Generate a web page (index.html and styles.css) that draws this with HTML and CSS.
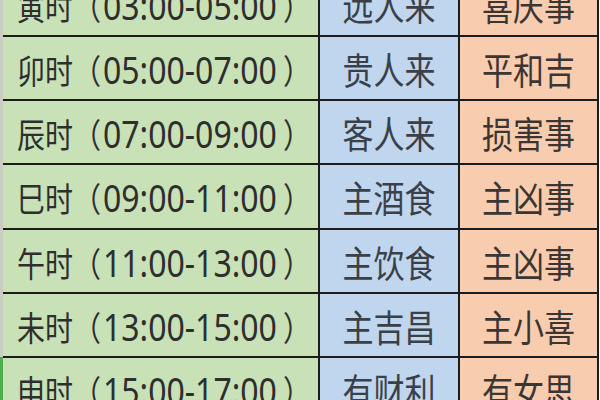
FILE: index.html
```html
<!DOCTYPE html>
<html lang="zh-CN">
<head>
<meta charset="utf-8">
<link rel="stylesheet" href="styles.css">
</head>
<body>
<div class="sheet">
  <div class="gutter"><span class="mark"></span></div>
  <div class="grid">
    <div class="cell time"><span class="t">寅时（<span class="num">03:00-05:00</span>）</span></div><div class="cell who"><span class="t">远人来</span></div><div class="cell what"><span class="t">喜庆事</span></div>
    <div class="cell time"><span class="t">卯时（<span class="num">05:00-07:00</span>）</span></div><div class="cell who"><span class="t">贵人来</span></div><div class="cell what"><span class="t">平和吉</span></div>
    <div class="cell time"><span class="t">辰时（<span class="num">07:00-09:00</span>）</span></div><div class="cell who"><span class="t">客人来</span></div><div class="cell what"><span class="t">损害事</span></div>
    <div class="cell time"><span class="t">巳时（<span class="num">09:00-11:00</span>）</span></div><div class="cell who"><span class="t">主酒食</span></div><div class="cell what"><span class="t">主凶事</span></div>
    <div class="cell time"><span class="t">午时（<span class="num">11:00-13:00</span>）</span></div><div class="cell who"><span class="t">主饮食</span></div><div class="cell what"><span class="t">主凶事</span></div>
    <div class="cell time"><span class="t">未时（<span class="num">13:00-15:00</span>）</span></div><div class="cell who"><span class="t">主吉昌</span></div><div class="cell what"><span class="t">主小喜</span></div>
    <div class="cell time"><span class="t">申时（<span class="num">15:00-17:00</span>）</span></div><div class="cell who"><span class="t">有财利</span></div><div class="cell what"><span class="t">有女思</span></div>
  </div>
</div>
</body>
</html>
```

FILE: styles.css
```css
html, body {
  margin: 0;
  padding: 0;
  background: #ffffff;
  overflow: hidden;
}
.sheet {
  display: flex;
  width: 600px;
  height: 400px;
  overflow: hidden;
}
.gutter {
  width: 3px;
  flex: none;
  background: #c9cdc4;
  display: flex;
  flex-direction: column;
  justify-content: flex-end;
}
.mark {
  height: 43px;
  background: #4cae4c;
}
.grid {
  display: grid;
  grid-template-columns: 315px 138px 137px;
  grid-template-rows: 62px 62px 62px 63px 62px 62px 62px;
  gap: 2px;
  padding-right: 2px;
  background: #1c1c1c;
  margin-top: -27px;
  align-self: flex-start;
}
.cell {
  display: flex;
  align-items: center;
  font-family: "Noto Sans CJK SC", "Noto Sans", sans-serif;
  color: #2e2e2e;
  white-space: nowrap;
}
.t {
  display: inline-block;
  transform: scaleY(1.2);
}
.time {
  background: #c8e1b6;
  padding-left: 14px;
  font-size: 28px;
}
.num {
  font-family: "Noto Sans", "Noto Sans CJK SC", sans-serif;
  font-size: 32px;
  margin: 0 6px 0 2px;
}
.who {
  background: #bfd6ee;
  justify-content: center;
  color: #3b4048;
  font-size: 31px;
}
.what {
  background: #f8ccae;
  justify-content: center;
  color: #3b3633;
  font-size: 31px;
}
```
